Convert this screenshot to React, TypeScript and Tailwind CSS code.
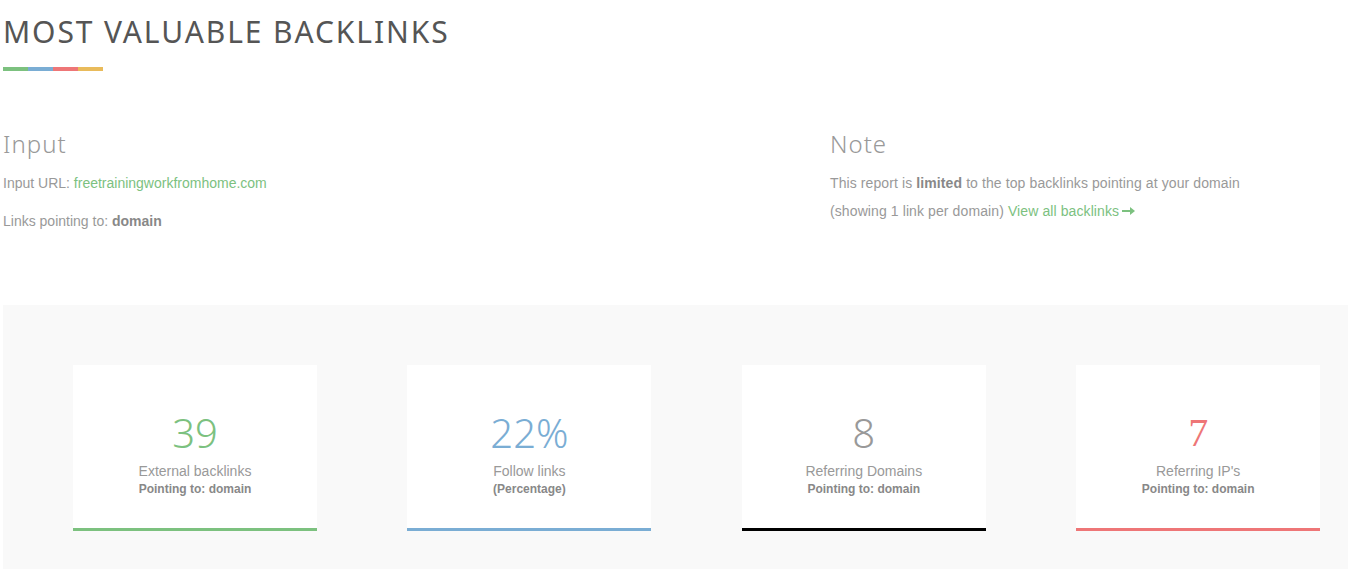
import React from 'react';

const heading = { fontFamily: '"Noto Sans", "Open Sans", sans-serif' };

interface Stat {
  value: string;
  label: string;
  sub: string;
  valueClass: string;
  borderClass: string;
  serif?: boolean;
}

const stats: Stat[] = [
  { value: '39', label: 'External backlinks', sub: 'Pointing to: domain', valueClass: 'text-[#7cc17f]', borderClass: 'border-[#7cc17f]' },
  { value: '22%', label: 'Follow links', sub: '(Percentage)', valueClass: 'text-[#7aadd4]', borderClass: 'border-[#7aadd4]' },
  { value: '8', label: 'Referring Domains', sub: 'Pointing to: domain', valueClass: 'text-[#999999]', borderClass: 'border-black' },
  { value: '7', label: "Referring IP's", sub: 'Pointing to: domain', valueClass: 'text-[#ee7677]', borderClass: 'border-[#ee7677]', serif: true },
];

const StatCard: React.FC<{ stat: Stat }> = ({ stat }) => (
  <div className={`w-[244px] h-[166px] bg-white border-b-[3px] ${stat.borderClass} flex flex-col items-center pt-[46px]`}>
    <div
      className={`text-[40px] leading-[44px] font-light ${stat.valueClass}`}
      style={{ fontFamily: stat.serif ? '"Liberation Serif", serif' : '"Noto Sans", sans-serif' }}
    >
      {stat.value}
    </div>
    <div className="mt-[7px] text-[14px] leading-[18px] text-[#999]">{stat.label}</div>
    <div className="text-[12px] leading-[18px] font-bold text-[#888]">{stat.sub}</div>
  </div>
);

export default function App() {
  return (
    <div className="w-[1348px] h-[569px] bg-white overflow-hidden" style={{ fontFamily: '"Liberation Sans", Arial, sans-serif' }}>
      {/* Title */}
      <div className="pl-[3px] pt-[14px]">
        <h1 className="text-[30px] leading-[36px] text-[#555] tracking-[1.9px] font-normal" style={heading}>
          MOST VALUABLE BACKLINKS
        </h1>
        <div className="flex mt-[17px] h-[4px] w-[100px]">
          <div className="flex-1 bg-[#7cc17f]" />
          <div className="flex-1 bg-[#7aadd4]" />
          <div className="flex-1 bg-[#ee7677]" />
          <div className="flex-1 bg-[#e9bb5b]" />
        </div>
      </div>

      {/* Input / Note */}
      <div className="flex pl-[3px] mt-[58px] h-[176px]">
        <div className="w-[827px]">
          <h2 className="text-[24px] leading-[30px] text-[#999] font-light tracking-[1px]" style={heading}>Input</h2>
          <p className="mt-[14px] text-[14px] leading-[20px] text-[#999]">
            Input URL: <span className="text-[#7cc17f]">freetrainingworkfromhome.com</span>
          </p>
          <p className="mt-[18px] text-[14px] leading-[20px] text-[#999]">
            Links pointing to: <b className="text-[#888]">domain</b>
          </p>
        </div>
        <div>
          <h2 className="text-[24px] leading-[30px] text-[#999] font-light tracking-[1px]" style={heading}>Note</h2>
          <p className="mt-[10px] text-[14px] leading-[28px] text-[#999] tracking-[0.1px]">
            This report is <b className="text-[#888]">limited</b> to the top backlinks pointing at your domain
            <br />
            (showing 1 link per domain){' '}
            <span className="text-[#7cc17f] inline-flex items-center gap-[3px]">
              View all backlinks
              <svg width="13" height="8" viewBox="0 0 13 8" fill="#7cc17f">
                <rect x="0" y="3" width="9" height="2" />
                <path d="M8 0 L13 4 L8 8 Z" />
              </svg>
            </span>
          </p>
        </div>
      </div>

      {/* Stats */}
      <div className="ml-[3px] bg-[#f9f9f9] h-[264px] pt-[60px] pl-[70px] flex gap-[90.4px]">
        {stats.map((s) => (
          <StatCard key={s.label} stat={s} />
        ))}
      </div>
    </div>
  );
}
